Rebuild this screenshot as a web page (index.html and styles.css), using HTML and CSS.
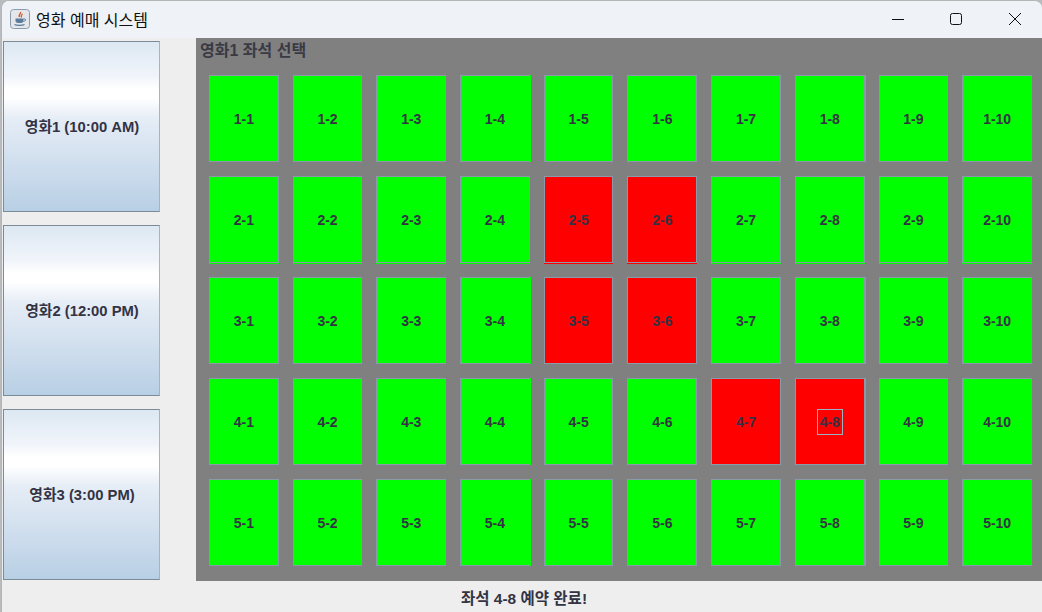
FILE: index.html
```html
<!DOCTYPE html>
<html lang="ko">
  <head>
    <meta charset="UTF-8" />
    <meta name="viewport" content="width=device-width, initial-scale=1.0" />
    <title>영화 예매 시스템</title>
    <link rel="stylesheet" href="styles.css">
  </head>
  <body>
    <div class="window">
      <!-- Title bar -->
      <header class="titlebar">
        <span class="app-icon">
          <svg width="20" height="20" viewBox="0 0 20 20">
            <rect x="0.5" y="0.5" width="19" height="19" rx="3" fill="#e4e6ea" stroke="#8a9bb0" />
            <path d="M10.5 3c1 1.500-2.500 2.500-1 5M12.500 5c-1 1-2 1.500-1 3.500" fill="none" stroke="#d8541e" stroke-width="1.300" />
            <path d="M5.500 9.500h8v2.500c0 1.500-1.500 2-4 2s-4-.5-4-2z" fill="#5b7c9c" />
            <path d="M13.500 10h1.500c1 0 1 2-1.500 2.500" fill="none" stroke="#5b7c9c" />
            <path d="M4.500 15.500c2 1.200 8 1.200 10 0" fill="none" stroke="#5b7c9c" stroke-width="1.200" />
          </svg>
        </span>
        <span class="app-title">영화 예매 시스템</span>
        <div class="window-controls">
          <svg width="12" height="12" viewBox="0 0 12 12"><path d="M0 6.500h12" stroke="#111" fill="none" /></svg>
          <svg width="12" height="12" viewBox="0 0 12 12"><rect x="0.500" y="0.500" width="11" height="11" rx="2" stroke="#111" fill="none" /></svg>
          <svg width="12" height="12" viewBox="0 0 12 12"><path d="M0 0l12 12M12 0L0 12" stroke="#111" fill="none" /></svg>
        </div>
      </header>

      <main class="content">
        <!-- Movie list -->
        <nav class="movies">
          <button class="movie-btn">영화1 (10:00 AM)</button>
          <button class="movie-btn">영화2 (12:00 PM)</button>
          <button class="movie-btn">영화3 (3:00 PM)</button>
        </nav>

        <!-- Seats -->
        <section class="seat-panel">
          <h2 class="seat-title">영화1 좌석 선택</h2>
          <div class="seat-grid" id="seats"></div>
        </section>
      </main>

      <footer class="status">좌석 4-8 예약 완료!</footer>
    </div>

    <script>
      document.addEventListener("DOMContentLoaded", function () {
        const seats = document.getElementById("seats");
        const reserved = ["2-5", "2-6", "3-5", "3-6", "4-7", "4-8"];

        for (let row = 1; row <= 5; row++) {
          for (let col = 1; col <= 10; col++) {
            const id = row + "-" + col;
            const seat = document.createElement("button");
            seat.className = reserved.includes(id) ? "seat reserved" : "seat";

            const label = document.createElement("span");
            label.textContent = id;
            if (id === "4-8") label.className = "focused";
            seat.appendChild(label);
            seats.appendChild(seat);
          }
        }
      });
    </script>
  </body>
</html>
```

FILE: styles.css
```css
html,
body {
  margin: 0;
  padding: 0;
  height: 100%;
  overflow: hidden;
}

body {
  background-color: #b8bcbe;
  font-family: "Liberation Sans", "Noto Sans CJK KR", sans-serif;
}

.window {
  display: flex;
  flex-direction: column;
  height: 612px;
  margin-left: 1px;
  background-color: #eeeeee;
  border-top: 1px solid #b5b5b5;
  border-left: 1px solid #b5b5b5;
  box-sizing: border-box;
  border-radius: 8px 8px 0 0;
  overflow: hidden;
}

.titlebar {
  display: flex;
  align-items: center;
  flex: 0 0 37px;
  box-sizing: border-box;
  background-color: #eff3f8;
  padding: 0 0 1px 8px;
}

.app-icon {
  display: flex;
  width: 20px;
  height: 20px;
  margin-right: 6px;
}

.app-title {
  font-family: "Noto Sans CJK KR", sans-serif;
  font-size: 16px;
  color: #111;
}

.window-controls {
  display: flex;
  gap: 47px;
  margin-left: auto;
  margin-right: 21px;
}

.window-controls svg:first-child {
  margin-right: -1px;
}

.content {
  display: flex;
  flex: 0 0 543px;
}

.movies {
  display: flex;
  flex-direction: column;
  gap: 13px;
  width: 194px;
  padding: 3px 0 0 1px;
  box-sizing: border-box;
}

.movie-btn {
  flex: 0 0 171px;
  width: 157px;
  padding: 0 0 2px 1px;
  border: 1px solid #7a8a99;
  border-right-color: #9fb5cc;
  background: linear-gradient(to bottom, #dde8f3 0%, #f0f4fa 20%, #ffffff 28%, #ffffff 33%, #e6edf6 45%, #b8cfe5 100%);
  font-family: "Liberation Sans", "Noto Sans CJK KR", sans-serif;
  font-size: 14.800px;
  font-weight: bold;
  color: #333344;
}

.seat-panel {
  flex: 1;
  background-color: #808080;
}

.seat-title {
  margin: 0;
  padding: 4px 0 0 4px;
  height: 37px;
  box-sizing: border-box;
  font-size: 16px;
  line-height: 18px;
  font-weight: bold;
  color: #3a3a44;
}

.seat-grid {
  display: grid;
  grid-template-columns: repeat(10, 1fr);
  grid-template-rows: repeat(5, 87px);
  gap: 14px;
  padding: 0 10px 0 13px;
}

.seat {
  min-width: 0;
  padding: 0;
  border: 1px solid #8a9aa8;
  background-color: #00ff00;
  font-family: "Liberation Sans", sans-serif;
  font-size: 14px;
  font-weight: bold;
  color: #333344;
}

.seat.reserved {
  background-color: #ff0000;
}

/* 1px of fill shows past the border on these seats */
.seat:nth-child(10n + 4),
.seat:nth-child(10n + 8) {
  box-shadow: 1px 0 0 #00ff00;
}

.seat:nth-child(n + 11):nth-child(-n + 20) {
  box-shadow: 0 1px 0 #00ff00;
}

.seat:nth-child(14),
.seat:nth-child(18) {
  box-shadow: 1px 0 0 #00ff00, 0 1px 0 #00ff00;
}

.seat.reserved:nth-child(n + 11):nth-child(-n + 20) {
  box-shadow: 0 1px 0 #ff0000;
}

.focused {
  display: inline-block;
  padding: 4px 2px;
  outline: 1px solid #9db2c4;
}

.status {
  flex: 1;
  padding-left: 459px;
  line-height: 36px;
  font-size: 15.500px;
  font-weight: bold;
  color: #333344;
}
```
